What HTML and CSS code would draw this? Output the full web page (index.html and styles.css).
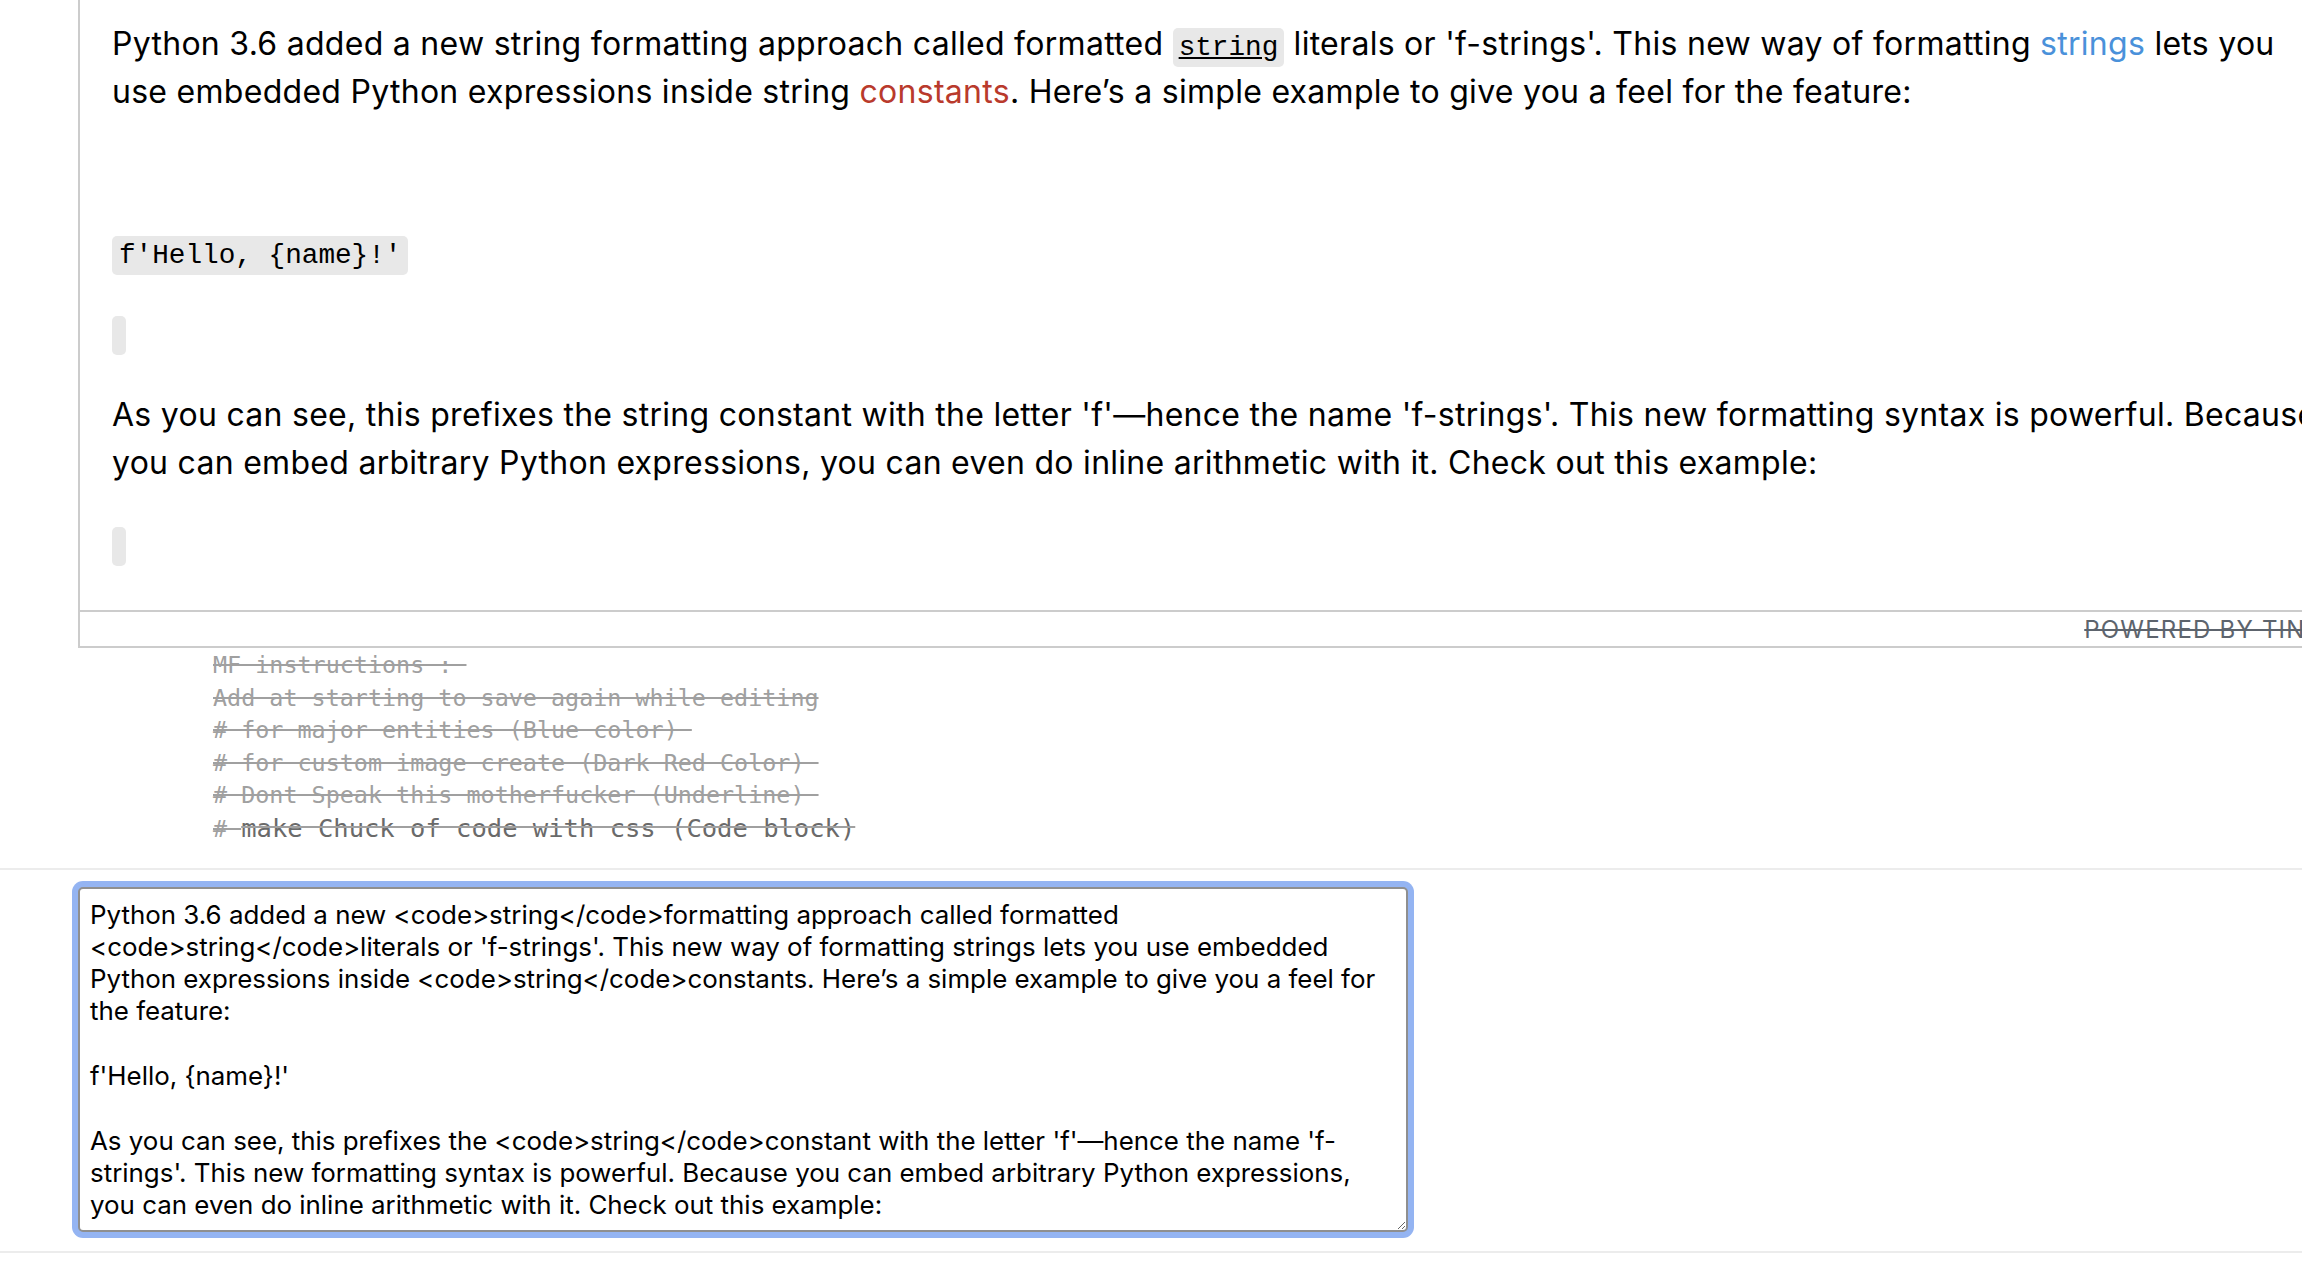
FILE: index.html
```html
<!DOCTYPE html>
<html lang="en">
<head>
<meta charset="utf-8">
<title>Editor</title>
<link rel="stylesheet" href="styles.css">
</head>
<body>
<div class="page">
  <div class="editor">
    <div class="editor-body">
      <p>Python 3.6 added a new string formatting approach called formatted <code class="speak">string</code> literals or 'f-strings'. This new way of formatting <span class="entity">strings</span> lets you use embedded Python expressions inside string <span class="custom">constants</span>. Here’s a simple example to give you a feel for the feature:</p>
      <p>&nbsp;</p>
      <p><code>f'Hello, {name}!'</code></p>
      <p><code></code></p>
      <p>As you can see, this prefixes the string constant with the letter 'f'—hence the name 'f-strings'. This new formatting syntax is powerful. Because you can embed arbitrary Python expressions, you can even do inline arithmetic with it. Check out this example:</p>
      <p><code></code></p>
    </div>
    <div class="statusbar">
      <span class="branding">POWERED BY TINY</span>
      <span class="resize-handle"></span>
    </div>
  </div>

  <div class="notes">
    <div class="note">MF instructions : </div>
    <div class="note">Add at starting to save again while editing</div>
    <div class="note"># for major entities (Blue color) </div>
    <div class="note"># for custom image create (Dark Red Color) </div>
    <div class="note"># Dont Speak this motherfucker (Underline) </div>
    <div class="note"># <span class="note-strong">make Chuck of code with css (Code block)</span></div>
  </div>

  <div class="form-row">
    <textarea class="source">Python 3.6 added a new &lt;code&gt;string&lt;/code&gt;formatting approach called formatted &lt;code&gt;string&lt;/code&gt;literals or 'f-strings'. This new way of formatting strings lets you use embedded Python expressions inside &lt;code&gt;string&lt;/code&gt;constants. Here’s a simple example to give you a feel for the feature:

f'Hello, {name}!'

As you can see, this prefixes the &lt;code&gt;string&lt;/code&gt;constant with the letter 'f'—hence the name 'f-strings'. This new formatting syntax is powerful. Because you can embed arbitrary Python expressions, you can even do inline arithmetic with it. Check out this example:</textarea>
  </div>
</div>
</body>
</html>
```
FILE: styles.css
```css
html, body {
  margin: 0;
  padding: 0;
  background: #ffffff;
  overflow: hidden;
}

.page {
  width: 2302px;
  height: 1262px;
  overflow: hidden;
  font-family: Inter, "Liberation Sans", sans-serif;
  color: #000;
}

.editor {
  margin-left: 78px;
  width: 2281px;
  border: 2px solid #cccccc;
  border-top: none;
  box-sizing: border-box;
}

.editor-body {
  padding: 20px 32px 11px 32px;
  font-size: 32px;
  line-height: 48px;
  letter-spacing: 0.28px;
}

.editor-body p {
  margin: 32px 0;
}

.editor-body p:first-child {
  margin-top: 0;
}

.editor-body p:nth-child(5) {
  margin-top: 35px;
}

.editor-body code {
  font-family: "Liberation Mono", "Courier New", monospace;
  font-size: 27.7px;
  line-height: 1;
  letter-spacing: 0;
  background: #e8e8e8;
  border-radius: 5px;
  padding: 4px 7px;
}

.editor-body code.speak {
  text-decoration: underline;
  padding: 4px 6px;
}

.entity {
  color: #4a91da;
}

.custom {
  color: #b93a2c;
}

.statusbar {
  border-top: 2px solid #cccccc;
  height: 34px;
  display: flex;
  align-items: center;
  justify-content: flex-end;
  padding-right: 34px;
}

.branding {
  font-family: Inter, "Liberation Sans", sans-serif;
  font-size: 24px;
  letter-spacing: 1.2px;
  color: #5d646d;
  text-decoration: line-through;
}

.notes {
  margin: 1px 0 0 213px;
  font-family: "DejaVu Sans Mono", monospace;
  font-size: 23.4px;
  line-height: 32.6px;
  color: #a0a0a0;
}

.note {
  white-space: pre;
  text-decoration: line-through;
}

.note-strong {
  font-size: 25.5px;
  color: #6a6a6a;
}

.form-row {
  margin-top: 22px;
  border-top: 2px solid #ececec;
  border-bottom: 2px solid #ececec;
  padding: 17px 0 19px 78px;
}

.source {
  display: block;
  width: 1330px;
  height: 345px;
  box-sizing: border-box;
  margin: 0;
  padding: 10px;
  border: 2px solid #8f8f8f;
  border-radius: 5px;
  font-family: Inter, "Liberation Sans", sans-serif;
  font-size: 25.9px;
  line-height: 32.3px;
  color: #000;
  resize: both;
  overflow: hidden;
  outline: none;
  box-shadow: 0 0 0 6px #94b4f2;
}
```
